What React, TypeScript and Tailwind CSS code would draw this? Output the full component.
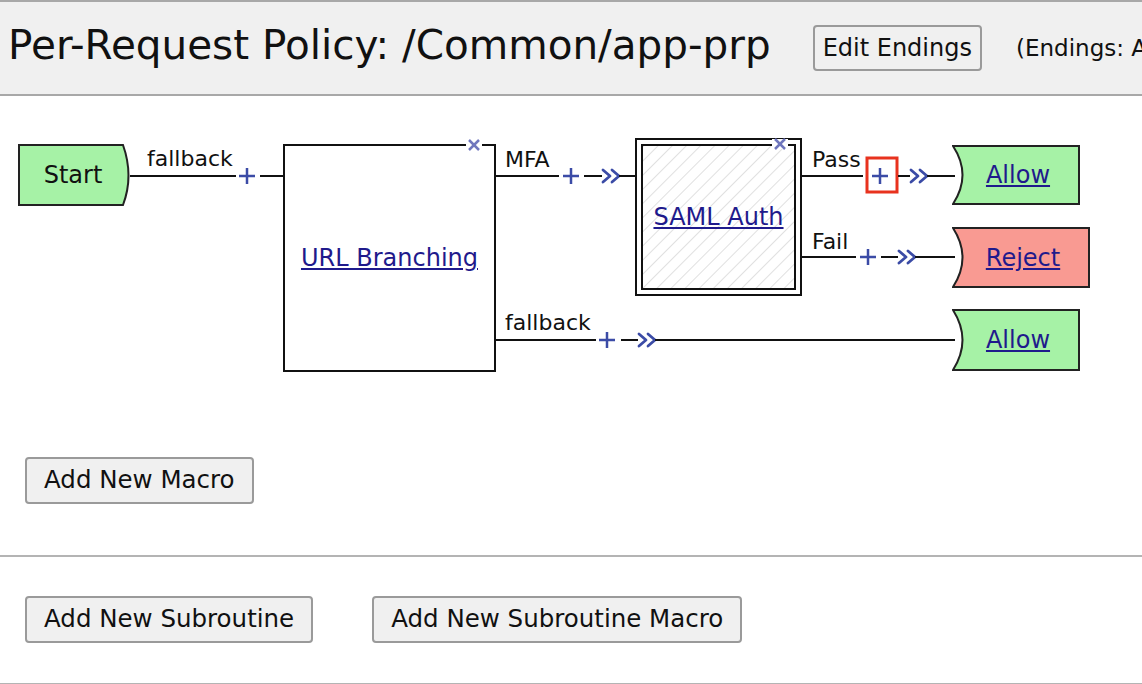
import React from 'react';

const font = { fontFamily: 'Tahoma, "DejaVu Sans", sans-serif' };

// little blue "+" used on every branch
const Plus = ({ x, y }: { x: number; y: number }) => (
  <g stroke="#3b4ba6" strokeWidth={2.5}>
    <line x1={x - 8} y1={y} x2={x + 8} y2={y} />
    <line x1={x} y1={y - 8} x2={x} y2={y + 8} />
  </g>
);

// ">>" arrow marker
const Chevrons = ({ x, y }: { x: number; y: number }) => (
  <g stroke="#3b4ba6" strokeWidth={2.8} fill="none" strokeLinejoin="round" strokeLinecap="round">
    <polyline points={`${x},${y - 6} ${x + 7},${y} ${x},${y + 6}`} />
    <polyline points={`${x + 9},${y - 6} ${x + 16},${y} ${x + 9},${y + 6}`} />
  </g>
);

const CloseX = ({ x, y }: { x: number; y: number }) => (
  <g>
    <rect x={x - 8} y={y - 5} width={16} height={10} fill="#fff" />
    <g stroke="#7077bd" strokeWidth={2.5}>
      <line x1={x - 5} y1={y - 5} x2={x + 5} y2={y + 5} />
      <line x1={x + 5} y1={y - 5} x2={x - 5} y2={y + 5} />
    </g>
  </g>
);

const Line = ({ x1, x2, y }: { x1: number; x2: number; y: number }) => (
  <line x1={x1} y1={y} x2={x2} y2={y} stroke="#111" strokeWidth={2} />
);

const Label = ({ x, y, children }: { x: number; y: number; children: React.ReactNode }) => (
  <span className="absolute text-[22px] leading-none text-[#111]" style={{ left: x, top: y }}>
    {children}
  </span>
);

// terminal node with notched left side (Allow / Reject)
const Ending = ({ x, y, w, h, fill, label }: { x: number; y: number; w: number; h: number; fill: string; label: string }) => (
  <div className="absolute" style={{ left: x, top: y, width: w, height: h }}>
    <svg width={w} height={h} className="absolute inset-0">
      <path
        d={`M1,1 L${w - 1},1 L${w - 1},${h - 1} L1,${h - 1} Q20,${h / 2} 1,1 Z`}
        fill={fill}
        stroke="#222"
        strokeWidth={2}
      />
    </svg>
    <a href="#" className="absolute inset-0 flex items-center justify-center pl-[4px] text-[24px] text-[#1f1a8c] underline">
      {label}
    </a>
  </div>
);

const Btn = ({ children, tight }: { children: React.ReactNode; tight?: boolean }) => (
  <button
    className={
      tight
        ? 'h-[46px] px-[8px] rounded-[4px] border-2 border-[#9a9a9a] bg-[#f0f0f0] text-[24px] text-[#111]'
        : 'h-[47px] px-[17px] rounded-[4px] border-2 border-[#9a9a9a] bg-[#f0f0f0] text-[24.5px] text-[#111]'
    }
  >
    {children}
  </button>
);

export default function App() {
  return (
    <div className="w-[1142px] h-[684px] bg-white overflow-hidden" style={font}>
      {/* Header */}
      <header className="h-[96px] bg-[#f0f0f0] border-t-2 border-b-2 border-[#a8a8a8] flex items-center pl-[8px] whitespace-nowrap">
        <h1 className="text-[40.5px] text-[#111] leading-none pb-[6px]">Per-Request Policy: /Common/app-prp</h1>
        <div className="ml-[42px]">
          <Btn tight>Edit Endings</Btn>
        </div>
        <span className="ml-[34px] text-[23px] text-[#111]">(Endings: Allow [default], Reject)</span>
      </header>

      {/* Diagram canvas */}
      <div className="relative h-[300px]">
        <svg width={1142} height={300} className="absolute inset-0">
          {/* Start node */}
          <path d="M19,49 L123,49 Q134,80 123,109 L19,109 Z" fill="#a6f2a6" stroke="#222" strokeWidth={2} />

          <Line x1={130} x2={236} y={80} />
          <Plus x={247} y={80} />
          <Line x1={260} x2={284} y={80} />

          {/* URL Branching box */}
          <rect x={284} y={49} width={211} height={226} fill="#fff" stroke="#111" strokeWidth={2} />
          <CloseX x={474} y={49} />

          {/* MFA */}
          <Line x1={495} x2={559} y={80} />
          <Plus x={571} y={80} />
          <Line x1={584} x2={602} y={80} />
          <Chevrons x={603} y={80} />
          <Line x1={619} x2={636} y={80} />

          {/* SAML Auth box */}
          <defs>
            <pattern id="hatch" width="10" height="10" patternUnits="userSpaceOnUse" patternTransform="rotate(45)">
              <line x1="0" y1="0" x2="0" y2="10" stroke="#d6d6d6" strokeWidth="1.5" />
            </pattern>
          </defs>
          <rect x={636} y={43} width={165} height={156} fill="#fff" stroke="#111" strokeWidth={2} />
          <rect x={642} y={49} width={153} height={144} fill="url(#hatch)" stroke="#111" strokeWidth={2} />
          <CloseX x={780} y={48} />

          {/* Pass */}
          <Line x1={801} x2={863} y={80} />
          <rect x={867} y={62} width={30} height={34} fill="none" stroke="#e8321e" strokeWidth={3} />
          <Plus x={880} y={80} />
          <Line x1={898} x2={910} y={80} />
          <Chevrons x={911} y={80} />
          <Line x1={927} x2={955} y={80} />

          {/* Fail */}
          <Line x1={801} x2={856} y={161} />
          <Plus x={868} y={161} />
          <Line x1={881} x2={898} y={161} />
          <Chevrons x={899} y={161} />
          <Line x1={915} x2={955} y={161} />

          {/* fallback */}
          <Line x1={495} x2={596} y={244} />
          <Plus x={607} y={244} />
          <Line x1={621} x2={638} y={244} />
          <Chevrons x={639} y={244} />
          <Line x1={655} x2={955} y={244} />
        </svg>

        <span className="absolute left-[19px] top-[49px] w-[108px] h-[60px] flex items-center justify-center text-[24px] text-[#111]">
          Start
        </span>
        <Label x={147} y={52}>fallback</Label>

        <a href="#" className="absolute left-[284px] top-[49px] w-[211px] h-[226px] flex items-center justify-center text-[24px] text-[#1f1a8c] underline">
          URL Branching
        </a>

        <Label x={505} y={53}>MFA</Label>

        <a href="#" className="absolute left-[636px] top-[43px] w-[165px] h-[156px] flex items-center justify-center text-[24px] text-[#1f1a8c] underline">
          SAML Auth
        </a>

        <Label x={812} y={53}>Pass</Label>
        <Label x={812} y={135}>Fail</Label>
        <Label x={505} y={216}>fallback</Label>

        <Ending x={952} y={49} w={128} h={60} fill="#a6f2a6" label="Allow" />
        <Ending x={952} y={131} w={138} h={61} fill="#f99a92" label="Reject" />
        <Ending x={952} y={213} w={128} h={62} fill="#a6f2a6" label="Allow" />
      </div>

      {/* Macros */}
      <section className="pt-[61px] pb-[51px] pl-[25px] border-b-2 border-[#b4b4b4]">
        <Btn>Add New Macro</Btn>
      </section>

      {/* Subroutines */}
      <section className="pt-[39px] pb-[40px] pl-[25px] flex gap-[59px] border-b-2 border-[#b4b4b4]">
        <Btn>Add New Subroutine</Btn>
        <Btn>Add New Subroutine Macro</Btn>
      </section>
    </div>
  );
}
